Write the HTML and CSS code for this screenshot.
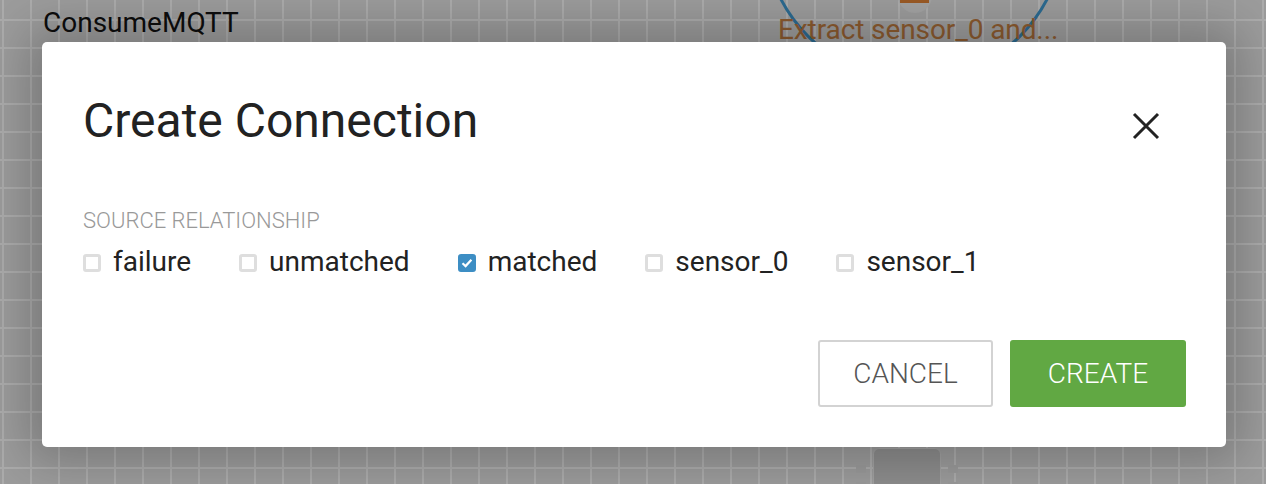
FILE: index.html
```html
<!DOCTYPE html>
<html>
<head>
<meta charset="utf-8">
<link rel="stylesheet" href="styles.css">
</head>
<body>
<div class="canvas">
  <div class="node-title">ConsumeMQTT</div>
  <div class="node-sub">ConsumeMQTT</div>
  <svg class="proc-circle" width="1266" height="60" viewBox="0 0 1266 60">
    <circle cx="914" cy="-70" r="150" fill="none" stroke="#2c6a90" stroke-width="3"/>
    <circle cx="915" cy="-4" r="17" fill="#a3a3a3"/>
    <rect x="900" y="-4" width="29" height="7" fill="#9a5a26"/>
  </svg>
  <div class="proc-label">Extract sensor_0 and...</div>
  <div class="funnel">
    <span class="tab tab-l1"></span>
    <span class="tab tab-r1"></span>
    <span class="tab tab-l2"></span>
    <span class="tab tab-r2"></span>
  </div>

  <div class="dialog">
    <div class="dialog-head">
      <h1 class="dialog-title">Create Connection</h1>
      <svg class="close" width="28" height="28" viewBox="0 0 28 28">
        <path d="M2 2 L26 26 M26 2 L2 26" stroke="#222" stroke-width="3" stroke-linecap="butt"/>
      </svg>
    </div>
    <div class="section-label">SOURCE RELATIONSHIP</div>
    <div class="rels">
      <label class="rel"><span class="box"></span>failure</label>
      <label class="rel"><span class="box"></span>unmatched</label>
      <label class="rel"><span class="box checked"><svg width="18" height="18" viewBox="0 0 18 18"><path d="M4.5 9.2 L7.6 12.1 L13.4 5.8" fill="none" stroke="#fff" stroke-width="2.2"/></svg></span>matched</label>
      <label class="rel"><span class="box"></span>sensor_0</label>
      <label class="rel"><span class="box"></span>sensor_1</label>
    </div>
    <div class="actions">
      <button class="btn btn-cancel">CANCEL</button>
      <button class="btn btn-create">CREATE</button>
    </div>
  </div>
</div>
</body>
</html>
```

FILE: styles.css
```css
html, body {
  margin: 0;
  padding: 0;
}
body {
  width: 1266px;
  height: 484px;
  overflow: hidden;
  font-family: Roboto, "Liberation Sans", sans-serif;
}
.canvas {
  position: relative;
  width: 1266px;
  height: 484px;
  background-color: #9c9c9c;
  background-image:
    linear-gradient(to right, #acacac 0, #acacac 2px, transparent 2px),
    linear-gradient(to bottom, #acacac 0, #acacac 2px, transparent 2px);
  background-size: 28px 28px;
  background-position: 2px 19px;
  overflow: hidden;
}
.node-title {
  position: absolute;
  left: 43px;
  top: 7px;
  font-size: 28px;
  line-height: 32px;
  color: #0d0d0d;
}
.node-sub {
  position: absolute;
  left: 43px;
  top: 40px;
  font-size: 20px;
  line-height: 22px;
  color: #3a3a3a;
}
.proc-circle {
  position: absolute;
  left: 0;
  top: 0;
}
.proc-label {
  position: absolute;
  left: 778px;
  top: 14px;
  font-size: 28px;
  line-height: 32px;
  letter-spacing: -0.1px;
  color: #8b5a2f;
  white-space: nowrap;
}
.funnel {
  position: absolute;
  left: 873px;
  top: 448px;
  width: 66px;
  height: 50px;
  background: #8d8d8d;
  border: 1px solid #a2a2a2;
  border-radius: 6px 6px 0 0;
}
.tab {
  position: absolute;
  width: 10px;
  height: 8px;
  background: #9a9a9a;
}
.tab-l1 { left: -18px; top: 16px; }
.tab-r1 { right: -18px; top: 16px; }
.tab-l2 { left: -18px; top: 33px; }
.tab-r2 { right: -18px; top: 33px; }

.dialog {
  position: absolute;
  left: 42px;
  top: 42px;
  width: 1184px;
  height: 405px;
  box-sizing: border-box;
  padding: 51px 40px 40px 41px;
  background: #fff;
  border-radius: 5px;
  box-shadow: 0 0 50px 14px rgba(0, 0, 0, 0.24);
  display: flex;
  flex-direction: column;
}
.dialog-head {
  display: flex;
  align-items: center;
  justify-content: space-between;
  height: 56px;
}
.dialog-title {
  margin: 0;
  font-size: 48px;
  line-height: 56px;
  font-weight: 400;
  color: #222;
}
.close {
  margin-right: 26px;
  margin-top: 10px;
}
.section-label {
  margin-top: 60px;
  font-size: 22px;
  line-height: 24px;
  font-weight: 300;
  color: #999;
}
.rels {
  margin-top: 13px;
  display: flex;
  align-items: center;
  gap: 48px;
  height: 32px;
}
.rel {
  display: flex;
  align-items: center;
  gap: 12px;
  font-size: 28px;
  line-height: 32px;
  color: #222;
}
.box {
  width: 18px;
  height: 18px;
  box-sizing: border-box;
  border: 3px solid #dedede;
  border-radius: 3px;
  background: #fff;
  position: relative;
  margin-top: 1px;
}
.box.checked {
  background: #3d8ec4;
  border-color: #3d8ec4;
}
.box.checked svg {
  position: absolute;
  left: -3px;
  top: -3px;
}
.actions {
  margin-top: auto;
  display: flex;
  justify-content: flex-end;
  gap: 17px;
}
.btn {
  width: 176px;
  height: 67px;
  box-sizing: border-box;
  border-radius: 3px;
  font-family: Roboto, "Liberation Sans", sans-serif;
  font-size: 28px;
  font-weight: 300;
  padding: 0;
  cursor: pointer;
}
.btn-cancel {
  width: 175px;
  background: #fff;
  border: 2px solid #d3d3d3;
  color: #555;
}
.btn-create {
  background: #61a843;
  border: none;
  color: #fff;
}
```
